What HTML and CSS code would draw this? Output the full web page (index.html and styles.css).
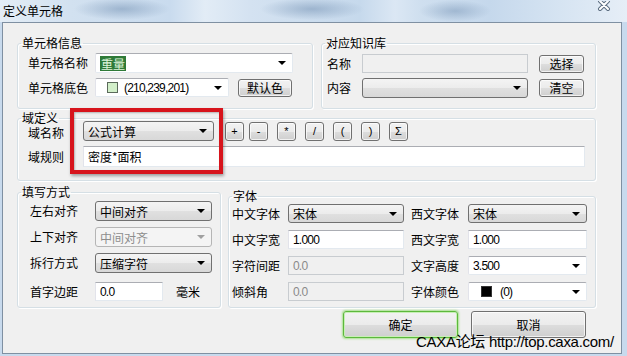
FILE: index.html
```html
<!DOCTYPE html>
<html lang="zh-CN">
<head>
    <meta charset="UTF-8">
    <title>定义单元格</title>
    <link rel="stylesheet" href="styles.css">
</head>
<body>
    <div class="window">
        <div class="titlebar">
            <span class="title">定义单元格</span>
            <svg class="close" width="14" height="12" viewBox="0 0 14 12">
                <path d="M3 0 L11 8 M11 0 L3 8" stroke="#5d6f82" stroke-width="4" stroke-linecap="round"/>
                <path d="M3 0 L11 8 M11 0 L3 8" stroke="#fff" stroke-width="2" stroke-linecap="round"/>
            </svg>
        </div>

        <div class="client">
            <div class="row-top">
                <fieldset class="group cell-info">
                    <legend>单元格信息</legend>
                    <div class="grid">
                        <span class="lbl">单元格名称</span>
                        <div class="combo edit w198">
                            <span class="val"><span class="sel">重量</span></span>
                            <span class="arrow"></span>
                        </div>
                        <span class="lbl">单元格底色</span>
                        <div class="line">
                            <div class="combo edit w134 h19">
                                <span class="val"><span class="swatch green"></span><span class="num">(210,239,201)</span></span>
                                <span class="arrow"></span>
                            </div>
                            <button class="btn small w54">默认色</button>
                        </div>
                    </div>
                </fieldset>

                <fieldset class="group kb">
                    <legend>对应知识库</legend>
                    <div class="grid kb-grid">
                        <span class="lbl">名称</span>
                        <div class="input disabled h19"></div>
                        <button class="btn small w45">选择</button>
                        <span class="lbl">内容</span>
                        <div class="combo">
                            <span class="val"></span>
                            <span class="arrow"></span>
                        </div>
                        <button class="btn small w45">清空</button>
                    </div>
                </fieldset>
            </div>

            <fieldset class="group field-def">
                <legend>域定义</legend>
                <div class="grid def-grid">
                    <span class="lbl">域名称</span>
                    <div class="line">
                        <div class="combo w131">
                            <span class="val">公式计算</span>
                            <span class="arrow"></span>
                        </div>
                        <div class="ops">
                            <button class="btn op">+</button>
                            <button class="btn op">-</button>
                            <button class="btn op">*</button>
                            <button class="btn op">/</button>
                            <button class="btn op">(</button>
                            <button class="btn op">)</button>
                            <button class="btn op">Σ</button>
                        </div>
                    </div>
                    <span class="lbl">域规则</span>
                    <div class="input h21">密度*面积</div>
                </div>
            </fieldset>

            <div class="row-bottom">
                <fieldset class="group fill">
                    <legend>填写方式</legend>
                    <div class="grid fill-grid">
                        <span class="lbl">左右对齐</span>
                        <div class="combo w117">
                            <span class="val">中间对齐</span>
                            <span class="arrow"></span>
                        </div>
                        <span class="lbl">上下对齐</span>
                        <div class="combo disabled w117">
                            <span class="val">中间对齐</span>
                            <span class="arrow"></span>
                        </div>
                        <span class="lbl">拆行方式</span>
                        <div class="combo w117">
                            <span class="val">压缩字符</span>
                            <span class="arrow"></span>
                        </div>
                        <span class="lbl last">首字边距</span>
                        <div class="line last">
                            <div class="input w68 h19"><span class="num">0.0</span></div>
                            <span class="unit">毫米</span>
                        </div>
                    </div>
                </fieldset>

                <fieldset class="group font">
                    <legend>字体</legend>
                    <div class="grid font-grid">
                        <span class="lbl">中文字体</span>
                        <div class="combo h19">
                            <span class="val">宋体</span>
                            <span class="arrow"></span>
                        </div>
                        <span class="lbl lbl2">西文字体</span>
                        <div class="combo h19">
                            <span class="val">宋体</span>
                            <span class="arrow"></span>
                        </div>

                        <span class="lbl">中文字宽</span>
                        <div class="input h19"><span class="num">1.000</span></div>
                        <span class="lbl lbl2">西文字宽</span>
                        <div class="input h19"><span class="num">1.000</span></div>

                        <span class="lbl">字符间距</span>
                        <div class="input disabled h19"><span class="num">0.0</span></div>
                        <span class="lbl lbl2">文字高度</span>
                        <div class="combo edit h19">
                            <span class="val"><span class="num">3.500</span></span>
                            <span class="arrow"></span>
                        </div>

                        <span class="lbl">倾斜角</span>
                        <div class="input disabled h19"><span class="num">0.0</span></div>
                        <span class="lbl lbl2">字体颜色</span>
                        <div class="combo edit h19">
                            <span class="val"><span class="swatch black"></span><span class="num">(0)</span></span>
                            <span class="arrow"></span>
                        </div>
                    </div>
                </fieldset>
            </div>

            <div class="actions">
                <button class="btn big default">确定</button>
                <button class="btn big">取消</button>
            </div>

            <!-- annotation overlays -->
            <div class="highlight"></div>
            <div class="watermark">CAXA论坛 http://top.caxa.com/</div>
        </div>
    </div>
</body>
</html>
```

FILE: styles.css
```css
body {
    margin: 0;
    width: 627px;
    height: 356px;
    overflow: hidden;
    background-color: #c8daed;
    font-family: "Noto Sans CJK SC", "Liberation Sans", sans-serif;
    font-size: 12px;
    color: #000;
}
.window {
    width: 627px;
    height: 356px;
    display: flex;
    flex-direction: column;
}
.titlebar {
    height: 22px;
    flex: none;
    display: flex;
    justify-content: space-between;
    padding: 0 16px 0 3px;
    background:
        radial-gradient(ellipse 48px 11px at 122px 9px, rgba(110,140,175,0.5), transparent),
        radial-gradient(ellipse 52px 11px at 312px 9px, rgba(110,140,175,0.5), transparent),
        radial-gradient(ellipse 36px 11px at 455px 11px, rgba(110,140,175,0.45), transparent),
        linear-gradient(to right, #e4edf6 0, #d2e1f0 70px, #c9dbee 170px, #e2ecf6 205px, #d4e2f1 250px,
            #c6d9ec 360px, #dbe7f4 395px, #cfdfef 420px, #c5d8ec 490px, #d6e4f2 560px, #e6eef7 627px);
}
.title {
    line-height: 22px;
}
.close {
    margin-top: 1px;
}

.client {
    position: relative;
    box-sizing: border-box;
    width: 620px;
    height: 332px;
    margin-left: 2px;
    border: 1px solid #7f90a2;
    background-color: #f0f0f0;
    padding: 13px 25px 0 14px;
}

/* group boxes */
.group {
    margin: 0;
    padding: 0;
    min-width: 0;
    box-sizing: border-box;
    border: 1px solid #d5dfe5;
    border-radius: 3px;
    box-shadow: inset 1px 1px 0 #fff, 1px 1px 0 #fff;
}
.group legend {
    margin-left: 3px;
    padding: 0 1px;
    line-height: 14px;
}
.grid {
    display: grid;
    align-items: center;
}
.lbl {
    white-space: nowrap;
    line-height: 14px;
}
.line {
    display: flex;
    align-items: center;
}

.row-top {
    display: flex;
    gap: 8px;
}
.cell-info {
    width: 296px;
    height: 73px;
}
.cell-info .grid {
    padding: 3px 0 0 10px;
    grid-template-columns: 67px auto;
    row-gap: 5px;
}
.cell-info .line {
    gap: 9px;
}
.kb {
    width: 275px;
    height: 73px;
}
.kb-grid {
    padding: 4px 0 0 5px;
    grid-template-columns: 24px 166px 45px;
    column-gap: 11px;
    row-gap: 5px;
    justify-items: start;
}
.kb-grid .input,
.kb-grid .combo {
    width: 166px;
}

.field-def {
    width: 100%;
    height: 68px;
    margin-top: 4px;
}
.field-def legend {
    line-height: 10px;
}
.def-grid {
    margin-top: -2px;
    padding-left: 10px;
    grid-template-columns: 55px 502px;
    row-gap: 5px;
}
.def-grid .lbl {
    line-height: 12px;
}
.def-grid .lbl:first-child {
    margin-top: 3px;
}
.ops {
    display: flex;
    gap: 9px;
    margin-left: 11px;
}
.ops .op:first-child {
    margin-right: -4px;
}

.row-bottom {
    display: flex;
    align-items: flex-end;
    gap: 7px;
    margin-top: 4px;
}
.fill {
    width: 204px;
    height: 123px;
}
.fill-grid {
    padding: 2px 0 0 12px;
    grid-template-columns: 65px auto;
    row-gap: 6px;
}
.fill-grid .last {
    margin-top: 3px;
}
.unit {
    margin-left: 13px;
}
.font {
    flex: 1;
    height: 119px;
}
.font-grid {
    padding: 1px 0 0 3px;
    grid-template-columns: 56px 116px 64px 119px;
    row-gap: 7px;
}
.lbl2 {
    padding-left: 7px;
}

/* controls */
.combo {
    box-sizing: border-box;
    height: 20px;
    display: flex;
    align-items: center;
    justify-content: space-between;
    padding: 0 6px 0 4px;
    border: 1px solid #707070;
    border-radius: 3px;
    background: linear-gradient(to bottom, #f4f4f4 0, #ececec 50%, #e0e0e0 51%, #d8d8d8 100%);
}
.combo.edit {
    border-radius: 2px;
    border-color: #dfe4ea #e3e9ef #e3e9ef #e2e3ea;
    border-top-color: #abadb3;
    background: #fff;
}
.combo.disabled {
    border-color: #b5b5b5;
    background: #f4f4f4;
    color: #8d8d8d;
}
.combo.disabled .arrow {
    border-top-color: #a0a0a0;
}
.val {
    display: flex;
    align-items: center;
    white-space: nowrap;
}
.arrow {
    width: 0;
    height: 0;
    border-left: 4px solid transparent;
    border-right: 4px solid transparent;
    border-top: 4px solid #000;
}
.sel {
    background-color: #2f7a38;
    color: #dff5da;
    padding: 0 1px;
    line-height: 15px;
}
.swatch {
    width: 9px;
    height: 9px;
    border: 1px solid #5b6a5b;
    margin: 0 6px 0 7px;
}
.swatch.green {
    background-color: rgb(210,239,201);
}
.swatch.black {
    background-color: #000;
    border-color: #333;
    margin: 0 8px 0 8px;
}
.num {
    font-family: "Liberation Sans", Arial, sans-serif;
    letter-spacing: -0.8px;
}
.input {
    box-sizing: border-box;
    height: 20px;
    display: flex;
    align-items: center;
    padding: 0 4px;
    background: #fff;
    border: 1px solid #e3e9ef;
    border-top-color: #abadb3;
    border-left-color: #e2e3ea;
}
.input.disabled {
    background: #f0f0f0;
    border-color: #c8ccd0;
    color: #8a8a8a;
}
.w198 { width: 198px; }
.w134 { width: 134px; }
.w131 { width: 131px; }
.w117 { width: 117px; }
.w68 { width: 68px; }
.w54 { width: 54px; }
.w45 { width: 45px; }
.h19 { height: 19px; }
.h21 { height: 21px; }

.btn {
    box-sizing: border-box;
    margin: 0;
    padding: 0;
    font-family: inherit;
    font-size: 12px;
    color: #000;
    border: 1px solid #707070;
    border-radius: 3px;
    background: linear-gradient(to bottom, #f2f2f2 0, #ebebeb 50%, #dddddd 51%, #cfcfcf 100%);
    box-shadow: inset 0 0 0 1px rgba(255,255,255,0.7);
}
.btn.small {
    height: 18px;
    line-height: 16px;
}
.btn.op {
    width: 19px;
    height: 19px;
    line-height: 16px;
    font-family: "Liberation Sans", sans-serif;
    font-size: 11px;
}
.btn.big {
    width: 115px;
    height: 27px;
}
.btn.default {
    border: 1px solid #5cb83c;
    box-shadow: 0 0 2px 1px #a8e08f, inset 0 0 0 1px #c7efb5;
}

.actions {
    display: flex;
    justify-content: flex-end;
    gap: 13px;
    margin-top: 3px;
    padding-right: 10px;
}

.highlight {
    position: absolute;
    left: 67px;
    top: 85px;
    width: 153px;
    height: 66px;
    box-sizing: border-box;
    border: 4px solid #d7141c;
    box-shadow: 1px 2px 3px rgba(0,0,0,0.35), inset 1px 1px 2px rgba(0,0,0,0.25);
}
.watermark {
    position: absolute;
    left: 413px;
    top: 310px;
    font-family: "Liberation Sans", "Noto Sans CJK SC", sans-serif;
    font-size: 15px;
    letter-spacing: -0.3px;
    line-height: 17px;
    white-space: nowrap;
}
```
